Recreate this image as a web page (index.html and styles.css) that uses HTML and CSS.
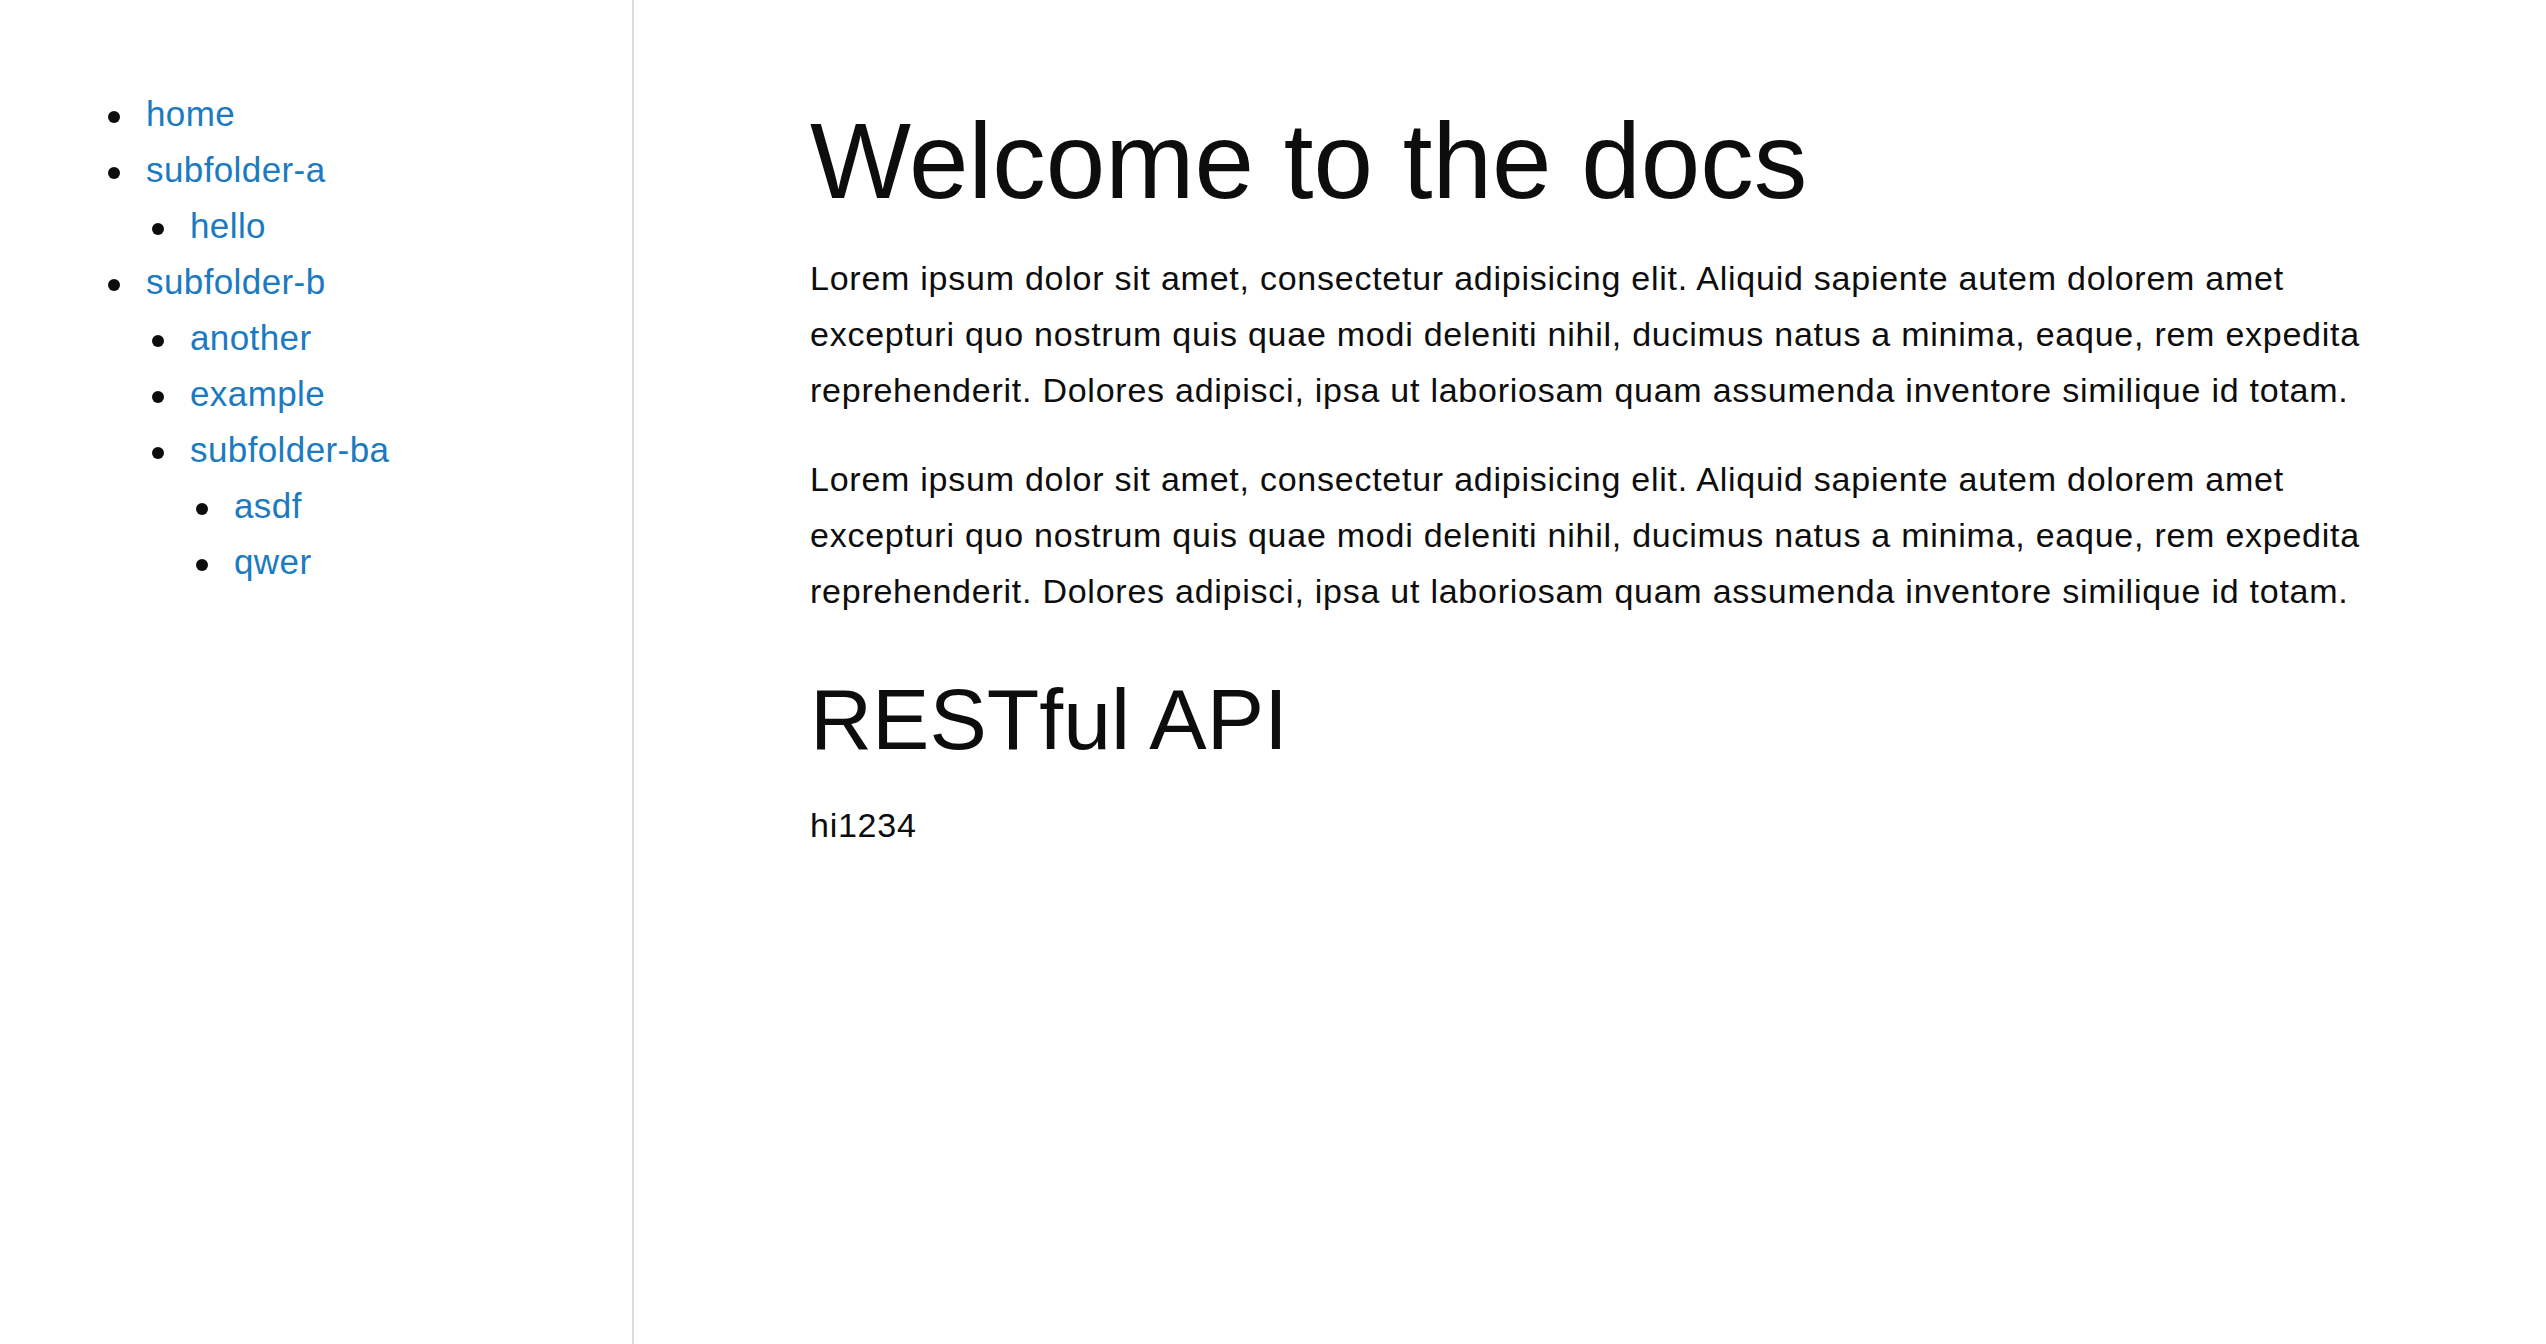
FILE: index.html
```html
<!DOCTYPE html>
<html lang="en">
<head>
<meta charset="utf-8">
<title>Docs</title>
<link rel="stylesheet" href="styles.css">
</head>
<body>
<div class="layout">
  <nav class="sidebar">
    <ul class="tree">
      <li><a href="#">home</a></li>
      <li><a href="#">subfolder-a</a>
        <ul class="tree">
          <li><a href="#">hello</a></li>
        </ul>
      </li>
      <li><a href="#">subfolder-b</a>
        <ul class="tree">
          <li><a href="#">another</a></li>
          <li><a href="#">example</a></li>
          <li><a href="#">subfolder-ba</a>
            <ul class="tree">
              <li><a href="#">asdf</a></li>
              <li><a href="#">qwer</a></li>
            </ul>
          </li>
        </ul>
      </li>
    </ul>
  </nav>
  <main class="content">
    <h1 class="title">Welcome to the docs</h1>
    <p class="para">Lorem ipsum dolor sit amet, consectetur adipisicing elit. Aliquid sapiente autem dolorem amet excepturi quo nostrum quis quae modi deleniti nihil, ducimus natus a minima, eaque, rem expedita reprehenderit. Dolores adipisci, ipsa ut laboriosam quam assumenda inventore similique id totam.</p>
    <p class="para">Lorem ipsum dolor sit amet, consectetur adipisicing elit. Aliquid sapiente autem dolorem amet excepturi quo nostrum quis quae modi deleniti nihil, ducimus natus a minima, eaque, rem expedita reprehenderit. Dolores adipisci, ipsa ut laboriosam quam assumenda inventore similique id totam.</p>
    <h2 class="subtitle">RESTful API</h2>
    <p class="para">hi1234</p>
  </main>
</div>
</body>
</html>
```
FILE: styles.css
```css
html, body {
  margin: 0;
  padding: 0;
  background: #ffffff;
}

body {
  font-family: "Liberation Sans", Arial, Helvetica, sans-serif;
  color: #0d0d0d;
}

.layout {
  display: flex;
  min-height: 1344px;
}

.sidebar {
  box-sizing: border-box;
  width: 634px;
  flex: 0 0 634px;
  border-right: 2px solid #dddddd;
  padding: 86px 0 0 102px;
}

.tree {
  margin: 0;
  padding-left: 44px;
  list-style: none;
  font-size: 35px;
  line-height: 56px;
  letter-spacing: 0.4px;
}

.tree li {
  position: relative;
}

.tree li::before {
  content: "";
  position: absolute;
  left: -38px;
  top: 25px;
  width: 12px;
  height: 12px;
  border-radius: 50%;
  background: #0d0d0d;
}

.tree a {
  color: #1b7ac0;
  text-decoration: none;
}

.content {
  flex: 1;
  padding: 97px 178px 0 176px;
}

.title {
  margin: 0 0 25px;
  font-size: 107px;
  line-height: 1.2;
  font-weight: normal;
  color: #0d0d0d;
}

.para {
  margin: 0 0 33px;
  font-size: 34px;
  line-height: 56px;
  letter-spacing: 0.75px;
}

.subtitle {
  margin: 49px 0 25px;
  font-size: 86px;
  line-height: 1.2;
  font-weight: normal;
  color: #0d0d0d;
}
```
